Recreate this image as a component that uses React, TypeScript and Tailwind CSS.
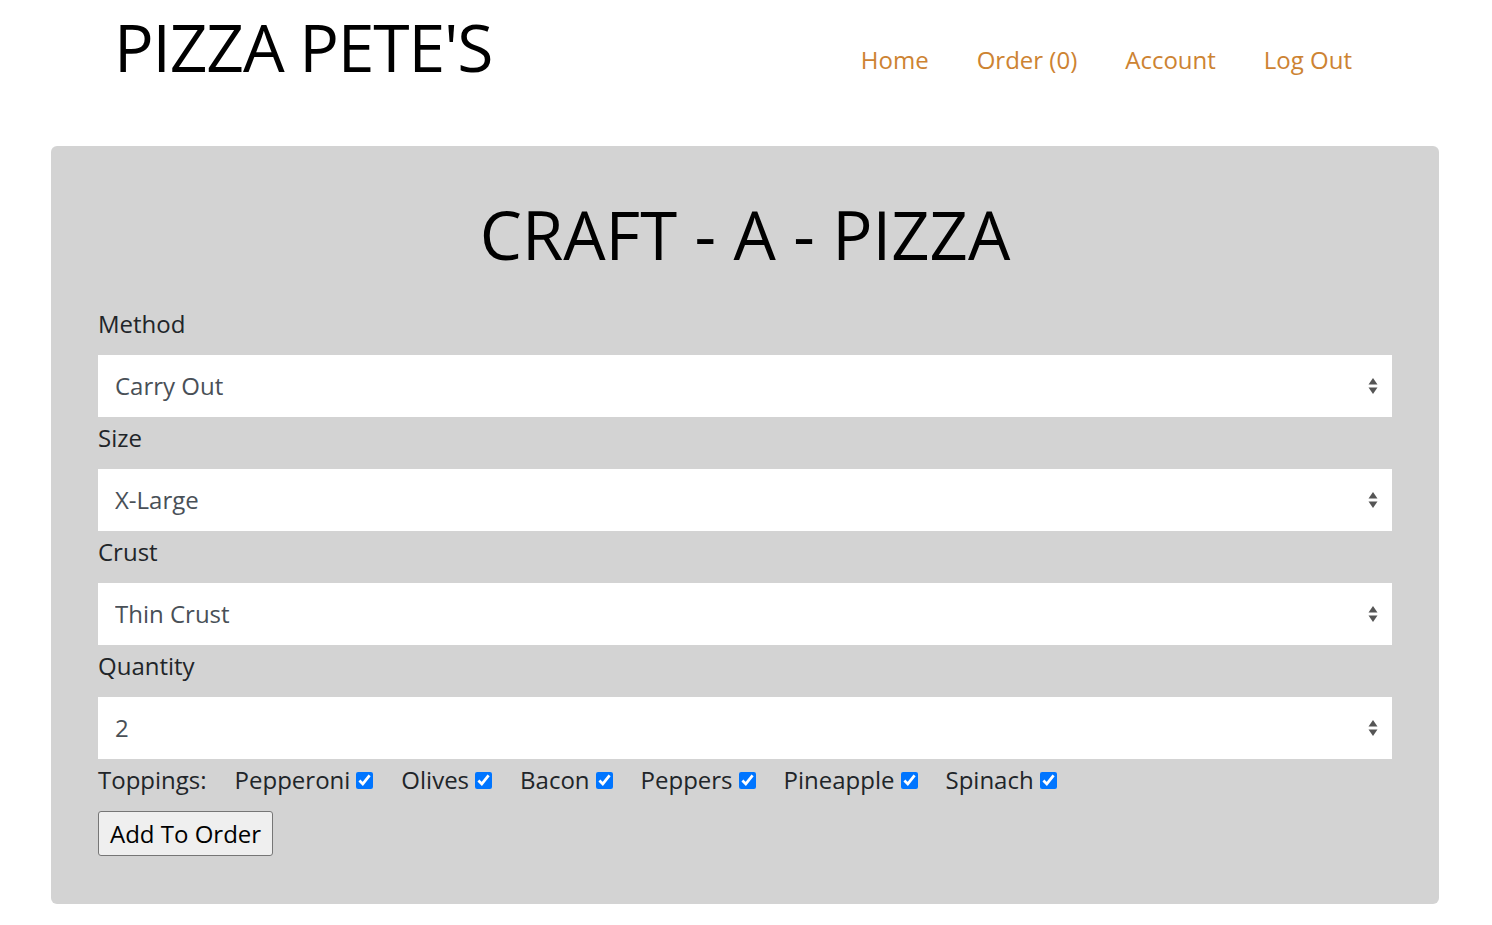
import { useState } from "react";

const navLinks = ["Home", "Order (0)", "Account", "Log Out"];

const fields = [
    { label: "Method", value: "Carry Out", options: ["Carry Out", "Delivery"] },
    { label: "Size", value: "X-Large", options: ["Small", "Medium", "Large", "X-Large"] },
    { label: "Crust", value: "Thin Crust", options: ["Thin Crust", "Hand Tossed", "Deep Dish"] },
    { label: "Quantity", value: "2", options: ["1", "2", "3", "4", "5"] },
];

const toppings = ["Pepperoni", "Olives", "Bacon", "Peppers", "Pineapple", "Spinach"];

const SelectField = ({ label, value, options }: { label: string; value: string; options: string[] }) => {
    return (
        <div>
            <label className="block text-[24px] leading-[36px] pt-[3px] mb-[13px]">{label}</label>
            <div className="relative">
                <select
                    defaultValue={value}
                    className="block w-full h-[62px] bg-white pl-[17px] pr-10 text-[24px] text-[#495057] appearance-none outline-none border-0 rounded-none font-['Open_Sans',sans-serif]"
                >
                    {options.map((o) => (
                        <option key={o}>{o}</option>
                    ))}
                </select>
                {/* up/down arrows */}
                <svg
                    className="pointer-events-none absolute right-[14px] top-1/2 -translate-y-1/2"
                    width="10"
                    height="20"
                    viewBox="0 0 10 20"
                >
                    <path d="M5 2 L9.5 8.5 H0.5 Z" fill="#555" />
                    <path d="M5 18 L9.5 11.5 H0.5 Z" fill="#555" />
                </svg>
            </div>
        </div>
    );
};

export default function App() {
    const [checked, setChecked] = useState<Record<string, boolean>>(
        Object.fromEntries(toppings.map((t) => [t, true]))
    );

    return (
        <div className="min-h-screen bg-white text-[#212529] font-['Open_Sans',sans-serif]">
            {/* Header */}
            <header className="flex items-start justify-between pl-[114px] pr-[140px] pt-[4px] h-[146px]">
                <h1 className="text-[66px] leading-[84px] font-normal text-black tracking-[-1.2px]">PIZZA PETE'S</h1>
                <nav className="flex gap-[48px] mt-[38px]">
                    {navLinks.map((name) => (
                        <a key={name} href="#" className="text-[24px] leading-[36px] text-[#cd8332]">
                            {name}
                        </a>
                    ))}
                </nav>
            </header>

            {/* Card */}
            <main className="ml-[51px] mr-[53px] bg-[#d3d3d3] rounded-[6px] px-[47px] pt-[48px] pb-[48px]">
                <h2 className="text-center text-[67px] leading-[80px] text-black mb-[29px]">CRAFT - A - PIZZA</h2>

                {fields.map((f) => (
                    <SelectField key={f.label} {...f} />
                ))}

                {/* Toppings */}
                <div className="flex items-center text-[24px] leading-[36px] pt-[3px]">
                    <span>Toppings:</span>
                    {toppings.map((t) => (
                        <label key={t} className="flex items-center ml-[28px]">
                            <span>{t}</span>
                            <input
                                type="checkbox"
                                checked={checked[t]}
                                onChange={() => setChecked({ ...checked, [t]: !checked[t] })}
                                className="ml-[6px] w-[17px] h-[17px] accent-[#0075ff]"
                            />
                        </label>
                    ))}
                </div>

                <button className="mt-[13px] h-[45px] px-[11px] bg-[#efefef] border border-[#767676] rounded-[3px] text-[24px] text-black">
                    Add To Order
                </button>
            </main>
        </div>
    );
}
